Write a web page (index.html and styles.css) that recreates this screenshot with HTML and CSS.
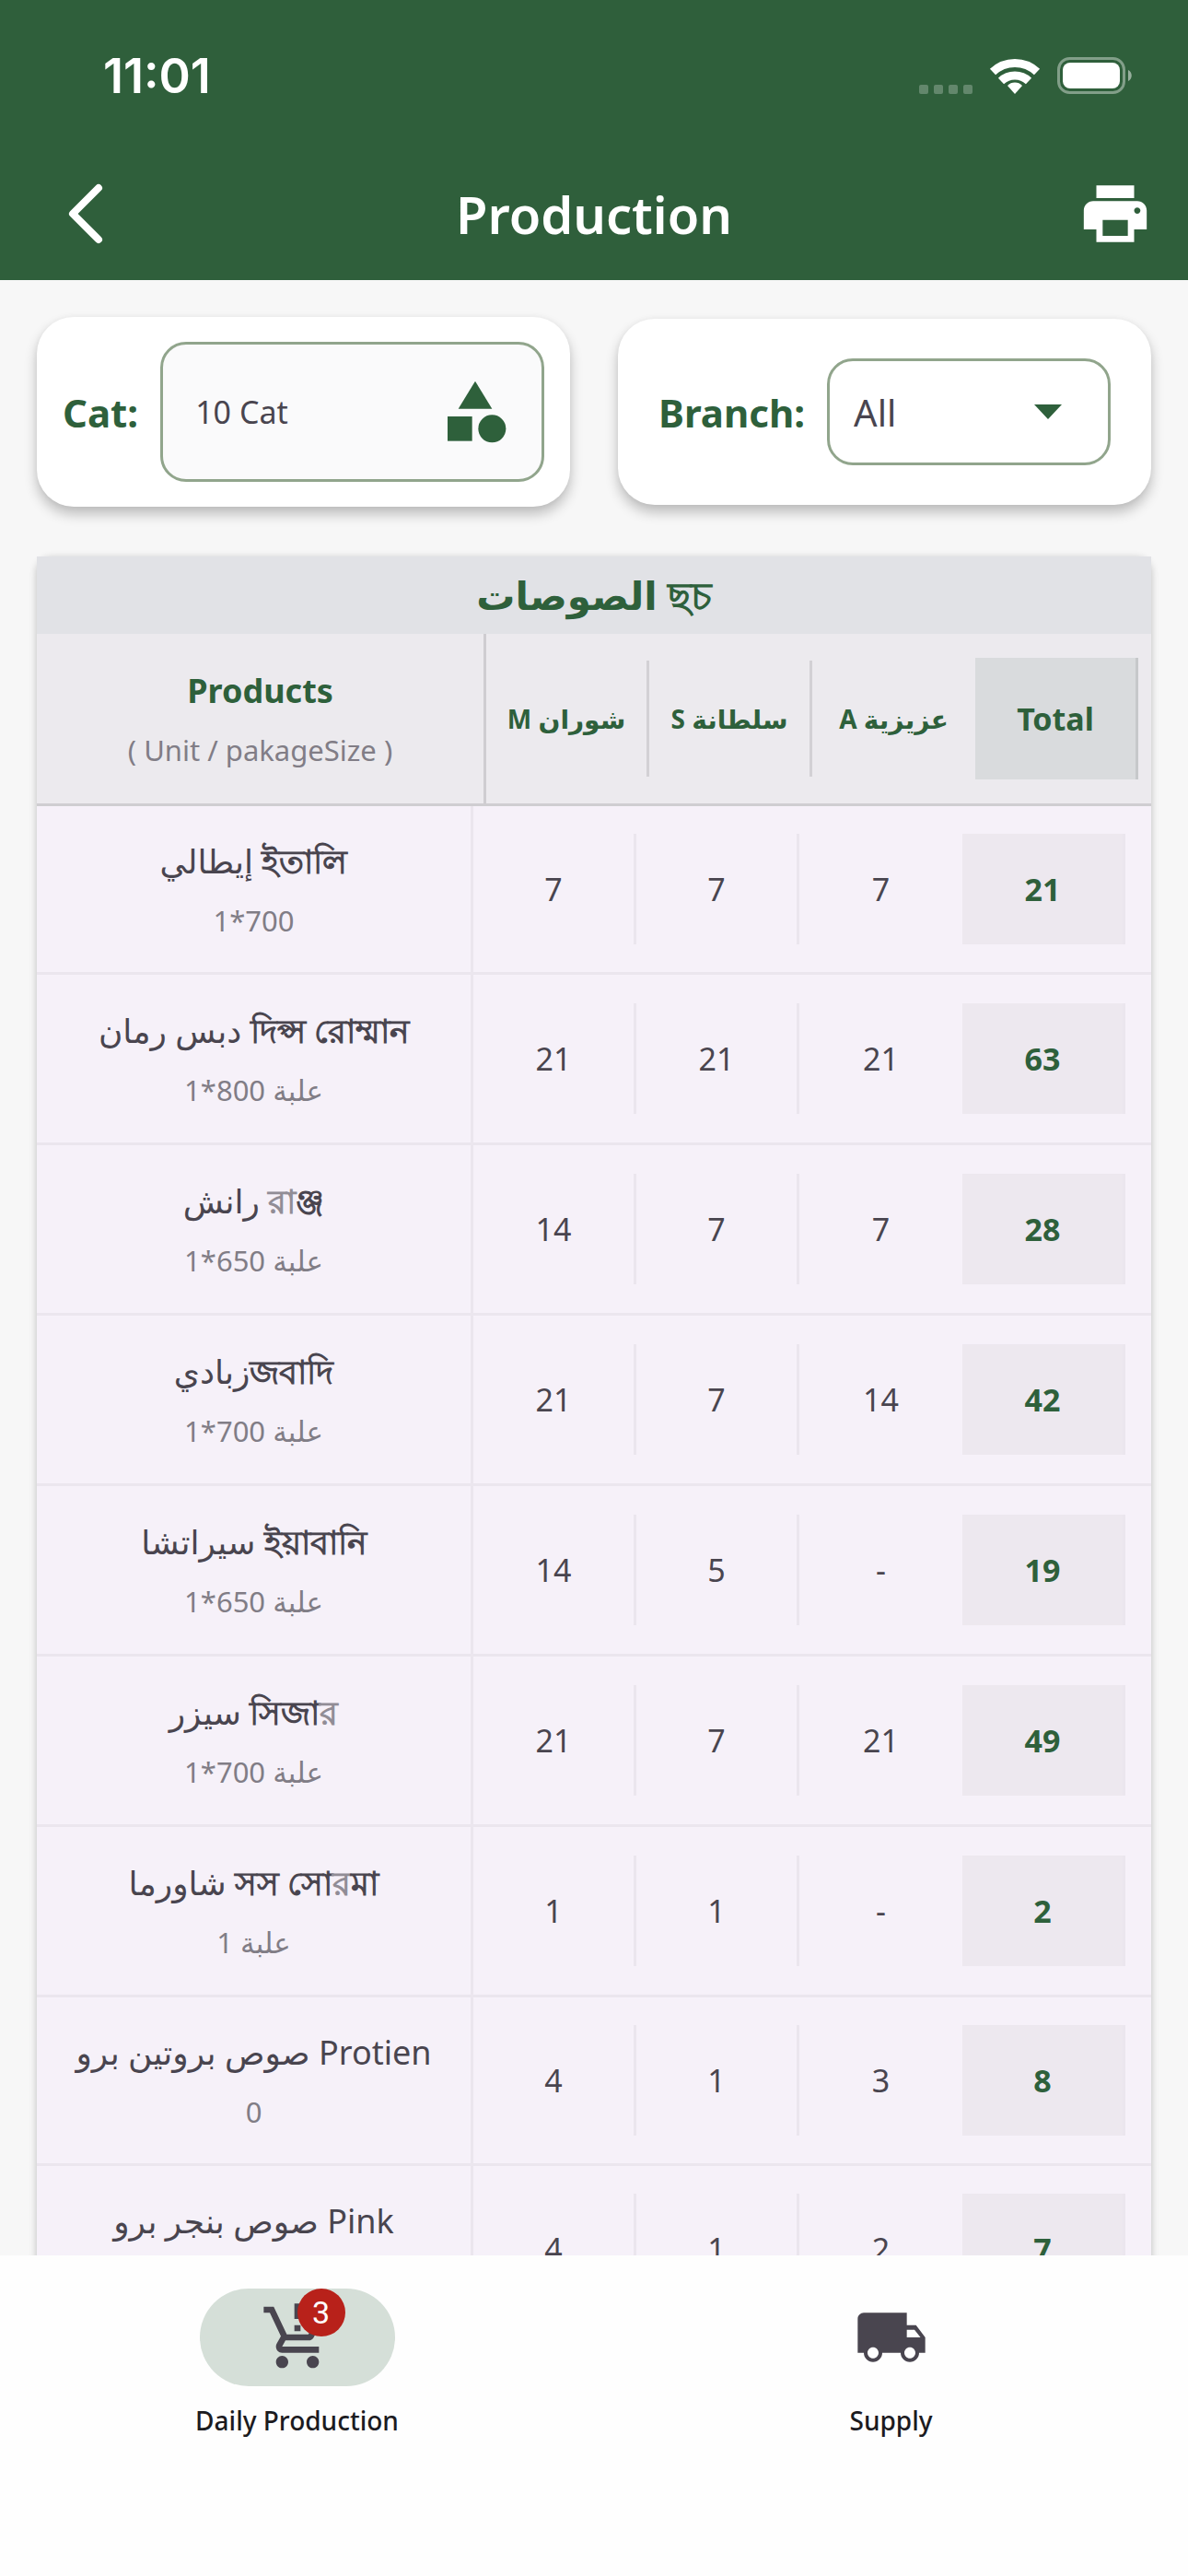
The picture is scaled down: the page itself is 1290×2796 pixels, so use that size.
FILE: index.html
```html
<!DOCTYPE html>
<html lang="en">
<head>
    <meta charset="UTF-8">
    <meta name="viewport" content="width=device-width, initial-scale=1.0">
    <title>Production</title>
    <link rel="stylesheet" href="styles.css">
</head>
<body>
    <header class="top">
        <div class="status">
            <span class="time">11:01</span>
            <div class="status-icons">
                <svg width="58" height="40" viewBox="0 0 58 40" fill="#fff" opacity="0.25">
                    <rect x="0" y="30" width="10" height="10" rx="2"/>
                    <rect x="16" y="30" width="10" height="10" rx="2"/>
                    <rect x="32" y="30" width="10" height="10" rx="2"/>
                    <rect x="48" y="30" width="10" height="10" rx="2"/>
                </svg>
                <svg width="56" height="40" viewBox="0 0 56 40" fill="none" stroke="#fff" stroke-width="9">
                    <path d="M4 16a35 35 0 0 1 48 0"/>
                    <path d="M13 26a22 22 0 0 1 30 0"/>
                    <path d="M28 40l-8-9a11 11 0 0 1 16 0z" fill="#fff" stroke="none"/>
                </svg>
                <svg width="82" height="40" viewBox="0 0 82 40">
                    <rect x="1.5" y="1.5" width="71" height="37" rx="12" fill="none" stroke="#fff" stroke-opacity="0.4" stroke-width="3"/>
                    <rect x="6" y="6" width="62" height="28" rx="8" fill="#fff"/>
                    <path d="M77 14c5 2 5 10 0 12z" fill="#fff" fill-opacity="0.5"/>
                </svg>
            </div>
        </div>
        <div class="appbar">
            <button class="icon-btn" aria-label="Back">
                <svg width="40" height="66" viewBox="0 0 40 66" fill="none" stroke="#fff" stroke-width="8" stroke-linecap="round" stroke-linejoin="round">
                    <path d="M35 5L7 33l28 28"/>
                </svg>
            </button>
            <h1>Production</h1>
            <button class="icon-btn" aria-label="Print">
                <svg width="82" height="82" viewBox="0 0 24 24" fill="#fff">
                    <path d="M19 8H5c-1.660 0-3 1.340-3 3v6h4v4h12v-4h4v-6c0-1.660-1.340-3-3-3zm-3 11H8v-5h8v5zm3-7c-.55 0-1-.45-1-1s.45-1 1-1 1 .45 1 1-.45 1-1 1zm-1-9H6v4h12V3z"/>
                </svg>
            </button>
        </div>
    </header>

    <main>
        <div class="filters">
            <div class="card">
                <label for="cat">Cat:</label>
                <button class="field cat-field" id="cat">
                    <span>10 Cat</span>
                    <svg width="80" height="80" viewBox="0 0 24 24" fill="#2e603b">
                        <path d="M12 2l-5.500 9h11z"/>
                        <circle cx="17.500" cy="17.500" r="4.500"/>
                        <path d="M3 13.500h8v8H3z"/>
                    </svg>
                </button>
            </div>
            <div class="card card-branch">
                <label for="branch">Branch:</label>
                <div class="field branch-field">
                    <select id="branch">
                        <option>All</option>
                        <option>شوران</option>
                        <option>سلطانة</option>
                        <option>عزيزية</option>
                    </select>
                    <svg class="caret" width="30" height="16" viewBox="0 0 30 16" fill="#2e603b"><path d="M0 0h30L15 16z"/></svg>
                </div>
            </div>
        </div>

        <table class="products">
            <caption>الصوصات ছচ</caption>
            <thead>
                <tr>
                    <th class="name"><span class="head">Products</span><small>( Unit / pakageSize )</small></th>
                    <th class="num">M شوران</th>
                    <th class="num">S سلطانة</th>
                    <th class="num">A عزيزية</th>
                    <th class="total">Total</th>
                </tr>
            </thead>
            <tbody>
                <tr><td class="name"><span>إيطالي <b>ইতালি</b></span><small>1*700</small></td><td class="num">7</td><td class="num">7</td><td class="num">7</td><td class="total">21</td></tr>
                <tr class="unit"><td class="name"><span>دبس رمان <b>দিপ্স রোম্মান</b></span><small>1*800 علبة</small></td><td class="num">21</td><td class="num">21</td><td class="num">21</td><td class="total">63</td></tr>
                <tr class="unit"><td class="name"><span>رانش <b><i>র</i>াঞ্জ</b></span><small>1*650 علبة</small></td><td class="num">14</td><td class="num">7</td><td class="num">7</td><td class="total">28</td></tr>
                <tr class="unit"><td class="name"><span>زبادي<b>জবাদি</b></span><small>1*700 علبة</small></td><td class="num">21</td><td class="num">7</td><td class="num">14</td><td class="total">42</td></tr>
                <tr class="unit"><td class="name"><span>سيراتشا <b>ইয়াবানি</b></span><small>1*650 علبة</small></td><td class="num">14</td><td class="num">5</td><td class="num">-</td><td class="total">19</td></tr>
                <tr class="unit"><td class="name"><span>سيزر <b>সিজা<i>র</i></b></span><small>1*700 علبة</small></td><td class="num">21</td><td class="num">7</td><td class="num">21</td><td class="total">49</td></tr>
                <tr class="unit"><td class="name"><span>شاورما <b>সস সো<i>র</i>মা</b></span><small>1 علبة</small></td><td class="num">1</td><td class="num">1</td><td class="num">-</td><td class="total">2</td></tr>
                <tr><td class="name"><span>صوص بروتين برو Protien</span><small>0</small></td><td class="num">4</td><td class="num">1</td><td class="num">3</td><td class="total">8</td></tr>
                <tr><td class="name"><span>صوص بنجر برو Pink</span><small>0</small></td><td class="num">4</td><td class="num">1</td><td class="num">2</td><td class="total">7</td></tr>
            </tbody>
        </table>
    </main>

    <nav class="tabs">
        <a href="#production" class="tab active">
            <span class="pill">
                <svg width="80" height="80" viewBox="0 0 24 24" fill="#49454f">
                    <path d="M13 10h-2V8h2v2zm0-4h-2V1h2v5zM7 18c-1.100 0-1.990.9-1.990 2S5.900 22 7 22s2-.9 2-2-.9-2-2-2zm10 0c-1.100 0-1.990.9-1.990 2s.89 2 1.990 2 2-.9 2-2-.9-2-2-2zm-8.900-5h7.450c.75 0 1.410-.41 1.750-1.030L21 4.960 19.250 4l-3.700 7H8.530L4.270 2H1v2h2l3.600 7.590-1.350 2.440C4.520 15.370 5.480 17 7 17h12v-2H7l1.100-2z"/>
                </svg>
                <span class="badge">3</span>
            </span>
            <span class="tab-label">Daily Production</span>
        </a>
        <a href="#supply" class="tab">
            <span class="pill">
                <svg width="80" height="80" viewBox="0 0 24 24" fill="#49454f">
                    <path d="M20 8h-3V4H3c-1.100 0-2 .9-2 2v11h2c0 1.660 1.340 3 3 3s3-1.340 3-3h6c0 1.660 1.340 3 3 3s3-1.340 3-3h2v-5l-3-4zM6 18.800c-1 0-1.800-.8-1.800-1.800s.8-1.800 1.800-1.800 1.800.8 1.800 1.800-.8 1.800-1.800 1.800zm13.500-9.300l1.960 2.500H17V9.500h2.500zM18 18.800c-1 0-1.800-.8-1.800-1.800s.8-1.800 1.800-1.800 1.800.8 1.800 1.800-.8 1.800-1.800 1.800z"/>
                </svg>
            </span>
            <span class="tab-label">Supply</span>
        </a>
    </nav>
</body>
</html>
```
FILE: styles.css
```css
* {
    box-sizing: border-box;
}

body {
    margin: 0;
    height: 100vh;
    display: flex;
    flex-direction: column;
    background-color: #f7f7f7;
    color: #49454f;
    font-family: "Noto Sans", "DejaVu Sans", sans-serif;
}

button, select {
    font-family: inherit;
    color: inherit;
    background: none;
    border: none;
    padding: 0;
    cursor: pointer;
}

svg {
    display: block;
    flex: none;
}

/* Header */
.top {
    background-color: #2f5f3b;
    color: #ffffff;
}

.status {
    display: flex;
    justify-content: space-between;
    align-items: center;
    padding: 48px 60px 0 112px;
    height: 116px;
}

.time {
    font-family: Inter, sans-serif;
    font-size: 52px;
    font-weight: 600;
}

.status-icons {
    display: flex;
    align-items: center;
    gap: 18px;
}

.appbar {
    display: grid;
    grid-template-columns: 1fr auto 1fr;
    align-items: center;
    height: 188px;
    padding: 44px 38px 0;
}

.appbar h1 {
    margin: 0;
    font-size: 56px;
    font-weight: 600;
    line-height: 80px;
}

.icon-btn {
    justify-self: start;
    padding-left: 34px;
}

.icon-btn:last-child {
    justify-self: end;
    padding-left: 0;
}

/* Filters */
main {
    flex: 1;
    min-height: 0;
    overflow: hidden;
    padding: 40px 40px 0;
}

.filters {
    display: grid;
    grid-template-columns: 1fr 1fr;
    gap: 52px;
    align-items: center;
    margin-bottom: 54px;
}

.card {
    display: flex;
    align-items: center;
    gap: 24px;
    padding: 27px 28px;
    background-color: #ffffff;
    border-radius: 40px;
    box-shadow: 0 8px 14px rgba(0, 0, 0, 0.24), 0 0 6px rgba(0, 0, 0, 0.04);
}

.card-branch {
    padding: 43px 44px;
}

.card label {
    color: #2e603b;
    font-size: 42px;
    font-weight: 700;
}

.field {
    flex: 1;
    display: flex;
    align-items: center;
    justify-content: space-between;
    border: 3px solid #91a58c;
    border-radius: 28px;
}

.cat-field {
    height: 152px;
    padding: 0 32px 0 35px;
    background-color: #fafafb;
    font-size: 34px;
}

.branch-field {
    position: relative;
    height: 116px;
}

.branch-field select {
    appearance: none;
    width: 100%;
    height: 100%;
    padding-left: 26px;
    font-size: 40px;
}

.caret {
    position: absolute;
    right: 50px;
    pointer-events: none;
}

/* Products table */
.products {
    display: block;
    background-color: #f6f1f9;
    border-radius: 16px 16px 0 0;
    box-shadow: 0 2px 8px rgba(0, 0, 0, 0.24);
}

.products caption {
    display: block;
    background-color: #e1e2e6;
    color: #2e603b;
    font-size: 42px;
    font-weight: 700;
    line-height: 84px;
}

.products thead, .products tbody {
    display: block;
}

.products tr {
    display: grid;
    grid-template-columns: 1fr repeat(4, 177px);
    align-items: center;
    height: 183px;
    padding-right: 28px;
    border-bottom: 3px solid #ebe6ee;
}

.products tr.unit {
    height: 185px;
}

.products thead tr {
    height: 187px;
    padding-right: 14px;
    background-color: #eceaee;
    border-bottom-color: #cfcdd1;
}

.products th, .products td {
    padding: 0;
    text-align: center;
}

.products .name {
    align-self: stretch;
    display: flex;
    flex-direction: column;
    justify-content: center;
    border-right: 3px solid #ebe6ee;
    font-size: 36px;
    line-height: 68px;
}

.name b {
    font-weight: 700;
}

.name i {
    color: #918d96;
    font-style: normal;
}

.products th.name {
    border-color: #cfcdd1;
}

.head {
    color: #2e603b;
}

.name small {
    color: #817d86;
    font-size: 31px;
    font-weight: 400;
    line-height: 60px;
}

.num, .total {
    height: 120px;
    line-height: 120px;
    font-size: 34px;
    border-right: 3px solid #ebe6ee;
}

.num:nth-child(4) {
    border-right: none;
}

.total {
    color: #2e603b;
    background-color: #ede8ef;
    font-weight: 700;
}

th.num {
    height: 126px;
    line-height: 126px;
    border-color: #d3d1d5;
    color: #2e603b;
    font-size: 28px;
}

th.total {
    height: 132px;
    line-height: 132px;
    background-color: #d9dbdd;
    border-color: #c6c8ca;
    font-size: 34px;
}

/* Bottom tabs */
.tabs {
    display: flex;
    padding: 36px 0 148px;
    background-color: #fefefe;
}

.tab {
    flex: 1;
    display: flex;
    flex-direction: column;
    align-items: center;
    gap: 16px;
    color: #1c1b1f;
    text-decoration: none;
}

.pill {
    position: relative;
    display: flex;
    align-items: center;
    justify-content: center;
    width: 212px;
    height: 106px;
    border-radius: 53px;
}

.active .pill {
    background-color: #d5dfd8;
}

.badge {
    position: absolute;
    top: 0;
    right: 54px;
    width: 52px;
    height: 52px;
    border-radius: 50%;
    background-color: #b8211a;
    color: #ffffff;
    font-family: Roboto, sans-serif;
    font-size: 34px;
    line-height: 52px;
    text-align: center;
}

.tab-label {
    font-size: 28px;
    font-weight: 500;
    line-height: 42px;
}
```
